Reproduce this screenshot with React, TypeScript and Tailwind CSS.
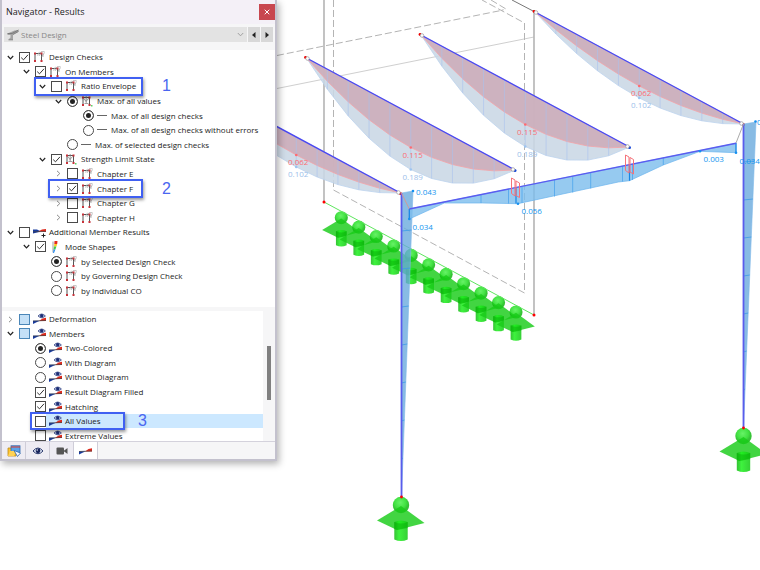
import { useState, type ReactNode } from 'react';
import { X } from 'lucide-react';
import clsx from 'clsx';

type IconName = 'frame' | 'frameMax' | 'dash' | 'member' | 'mode' | 'view';

type Item = {
  id: string;
  label: string;
  level: number;
  kind: 'checkbox' | 'radio';
  icon: IconName;
  group?: string;
  arrow?: 'open' | 'closed';
  checked?: boolean;
  partial?: boolean;
  selected?: boolean;
  callout?: { step: string; box: string };
};

const designItems: Item[] = [
  { id: 'design-checks', label: 'Design Checks', level: 0, kind: 'checkbox', icon: 'frame', arrow: 'open', checked: true },
  { id: 'on-members', label: 'On Members', level: 1, kind: 'checkbox', icon: 'frame', arrow: 'open', checked: true },
  {
    id: 'ratio-envelope', label: 'Ratio Envelope', level: 2, kind: 'checkbox', icon: 'frame', arrow: 'open',
    callout: { step: '1', box: 'left-8 w-[109px]' },
  },
  { id: 'max-values', label: 'Max. of all values', level: 3, kind: 'radio', group: 'envelope', icon: 'frameMax', arrow: 'open', checked: true },
  { id: 'max-checks', label: 'Max. of all design checks', level: 4, kind: 'radio', group: 'max', icon: 'dash', checked: true },
  { id: 'max-no-errors', label: 'Max. of all design checks without errors', level: 4, kind: 'radio', group: 'max', icon: 'dash' },
  { id: 'max-selected', label: 'Max. of selected design checks', level: 3, kind: 'radio', group: 'envelope', icon: 'dash' },
  { id: 'strength', label: 'Strength Limit State', level: 2, kind: 'checkbox', icon: 'frameMax', arrow: 'open', checked: true },
  { id: 'chapter-e', label: 'Chapter E', level: 3, kind: 'checkbox', icon: 'frame', arrow: 'closed' },
  {
    id: 'chapter-f', label: 'Chapter F', level: 3, kind: 'checkbox', icon: 'frame', arrow: 'closed', checked: true,
    callout: { step: '2', box: 'left-[46px] w-[95px]' },
  },
  { id: 'chapter-g', label: 'Chapter G', level: 3, kind: 'checkbox', icon: 'frame', arrow: 'closed' },
  { id: 'chapter-h', label: 'Chapter H', level: 3, kind: 'checkbox', icon: 'frame', arrow: 'closed' },
  { id: 'additional', label: 'Additional Member Results', level: 0, kind: 'checkbox', icon: 'member', arrow: 'open' },
  { id: 'mode-shapes', label: 'Mode Shapes', level: 1, kind: 'checkbox', icon: 'mode', arrow: 'open', checked: true },
  { id: 'by-selected', label: 'by Selected Design Check', level: 2, kind: 'radio', group: 'mode', icon: 'frame', checked: true },
  { id: 'by-governing', label: 'by Governing Design Check', level: 2, kind: 'radio', group: 'mode', icon: 'frame' },
  { id: 'by-co', label: 'by Individual CO', level: 2, kind: 'radio', group: 'mode', icon: 'frame' },
];

const displayItems: Item[] = [
  { id: 'deformation', label: 'Deformation', level: 0, kind: 'checkbox', icon: 'view', arrow: 'closed', partial: true },
  { id: 'members', label: 'Members', level: 0, kind: 'checkbox', icon: 'view', arrow: 'open', partial: true },
  { id: 'two-colored', label: 'Two-Colored', level: 1, kind: 'radio', group: 'style', icon: 'view', checked: true },
  { id: 'with-diagram', label: 'With Diagram', level: 1, kind: 'radio', group: 'style', icon: 'view' },
  { id: 'without-diagram', label: 'Without Diagram', level: 1, kind: 'radio', group: 'style', icon: 'view' },
  { id: 'filled', label: 'Result Diagram Filled', level: 1, kind: 'checkbox', icon: 'view', checked: true },
  { id: 'hatching', label: 'Hatching', level: 1, kind: 'checkbox', icon: 'view', checked: true },
  {
    id: 'all-values', label: 'All Values', level: 1, kind: 'checkbox', icon: 'view', selected: true,
    callout: { step: '3', box: 'left-7 w-[95px]' },
  },
  { id: 'extreme-values', label: 'Extreme Values', level: 1, kind: 'checkbox', icon: 'view' },
];

const indents = ['pl-0', 'pl-4', 'pl-8', 'pl-12', 'pl-16'];

function MemberShape() {
  return (
    <>
      <path d="M0 6.2 H7 L4 7.6 L0 9.6 Z" fill="#173a9e" />
      <path d="M6 6.6 L9.5 4 L13 3.2 V6.4 Z" fill="#dc2a1e" />
      <path d="M0 6.5 L13 6" stroke="#444" strokeWidth="0.7" />
    </>
  );
}

function TreeIcon({ name }: { name: IconName }) {
  if (name === 'dash') {
    return (
      <svg className="h-3 w-[10px] shrink-0" viewBox="0 0 10 12">
        <path d="M0 5.5 H10" stroke="#666" />
      </svg>
    );
  }
  if (name === 'mode') {
    return (
      <svg className="h-3 w-[13px] shrink-0" viewBox="0 0 13 12">
        <path d="M4 0.5 V11.5" stroke="#888" strokeWidth="0.8" />
        <path d="M5.5 0 H8.5 L8.2 3 H5.3 Z" fill="#e22a1e" />
        <path d="M5.3 3 H8.2 L7.4 5.5 H5 Z" fill="#ffc81e" />
        <path d="M5 5.5 H7.4 L6.4 8.5 H4.6 Z" fill="#42cc48" />
        <path d="M4.6 8.5 H6.4 L5 12 H4 Z" fill="#2b8df0" />
      </svg>
    );
  }
  if (name === 'member') {
    return (
      <svg className="h-3 w-[13px] shrink-0" viewBox="0 0 13 12">
        <path d="M0 3.5 H4 L8 5.5 L0 7.5 Z" fill="#173a9e" />
        <path d="M5 5.4 L9 3.6 L13 3 V6 Z" fill="#dc2a1e" />
        <path d="M0 5.8 L13 5.4" stroke="#444" strokeWidth="0.7" />
        <path d="M10.5 7.5 V11.5 M8.5 9.5 H12.5" stroke="#222" />
      </svg>
    );
  }
  if (name === 'view') {
    return (
      <svg className="h-3 w-[13px] shrink-0" viewBox="0 0 13 12">
        <g transform="translate(0 1.5)"><MemberShape /></g>
        <path d="M5 3 Q8.7 -1 12.4 3 Q8.7 6.6 5 3 Z" fill="#b8c4e4" stroke="#46568f" strokeWidth="0.9" />
        <circle cx="8.7" cy="2.8" r="1.7" fill="#1b2d75" />
      </svg>
    );
  }
  return (
    <svg className="h-3 w-[13px] shrink-0" viewBox="0 0 13 12" fill="none">
      <path d="M2 10 V2.5 H8.5 V10" stroke="#555" />
      {name === 'frame' ? (
        <path d="M4.5 4.5 L6.5 .8 M6 5 L8 1 M9 5.5 L11.5 1.5 M8 .7 H11.5 M10 3 V6" stroke="#aaa" strokeWidth="0.8" />
      ) : (
        <path d="M3 3.5 L5 6.5 L7.5 3.5 M3.5 8.5 H7.5 M5.2 1 V8" stroke="#888" strokeWidth="0.8" />
      )}
      <g fill="#c8323a">
        <rect x="1" y="1.5" width="2" height="2" />
        <rect x="7.5" y="1.5" width="2" height="2" />
        <rect x="1" y="9" width="2" height="2" />
        <rect x="7.5" y="9" width="2" height="2" />
      </g>
      {name === 'frameMax' && <rect x="10" y="10" width="1.5" height="1.5" fill="#5cd464" />}
    </svg>
  );
}

function Arrow({ open }: { open: boolean }) {
  return (
    <svg className="size-[7px]" viewBox="0 0 7 7" fill="none">
      {open ? (
        <path d="M.8 2 L3.5 4.8 L6.2 2" stroke="#222" strokeWidth="1.2" />
      ) : (
        <path d="M2 .8 L4.8 3.5 L2 6.2" stroke="#888" />
      )}
    </svg>
  );
}

function TreeRow({ item }: { item: Item }) {
  return (
    <li className={clsx('relative flex items-center', indents[item.level])}>
      <span className="flex w-[17px] shrink-0 justify-center">
        {item.arrow && (
          <button type="button" aria-label={`Toggle ${item.label}`}>
            <Arrow open={item.arrow === 'open'} />
          </button>
        )}
      </span>
      <span className="grid shrink-0 place-items-center">
        <input
          id={item.id}
          type={item.kind}
          name={item.group}
          defaultChecked={item.checked}
          className={clsx(
            'peer col-start-1 row-start-1 size-[11px] appearance-none border',
            item.kind === 'radio' && 'rounded-full checked:bg-[#222] checked:shadow-[inset_0_0_0_2px_#fff]',
            item.partial ? 'border-[#4a86b8] bg-[#c4e0f7]' : 'border-[#4a4a4a] bg-white'
          )}
        />
        {item.kind === 'checkbox' && (
          <svg className="pointer-events-none invisible col-start-1 row-start-1 size-[9px] peer-checked:visible" viewBox="0 0 9 9" fill="none">
            <path d="M1.2 4.6 L3.5 6.8 L8 1.8" stroke="#333" />
          </svg>
        )}
      </span>
      <label
        htmlFor={item.id}
        className={clsx(
          'flex h-full flex-1 items-center whitespace-nowrap pl-[3px]',
          item.icon === 'dash' ? 'gap-1' : 'gap-[3px]',
          item.selected && 'bg-[#cce8ff]'
        )}
      >
        <TreeIcon name={item.icon} />
        {item.label}
      </label>
      {item.callout && (
        <>
          <span className={clsx('pointer-events-none absolute -top-[2px] -bottom-[2px] z-10 border-2 border-[#4060f2] shadow-[1px_2px_3px_rgba(0,0,0,0.4)]', item.callout.box)} />
          <span className={clsx('pointer-events-none absolute z-10 font-["Liberation_Sans",sans-serif] text-base leading-4 text-[#4a66f0]', item.callout.step === '3' ? 'left-[136px]' : 'left-40')}>
            {item.callout.step}
          </span>
        </>
      )}
    </li>
  );
}

const tabs: { name: string; icon: ReactNode }[] = [
  {
    name: 'Data',
    icon: (
      <svg className="h-3 w-[14px]" viewBox="0 0 14 12">
        <path d="M1 3 H5 L6 4.5 H9 V11 H1 Z" fill="#ffc42e" stroke="#b98a1c" strokeWidth="0.8" />
        <rect x="4" y="0.8" width="9" height="6.5" fill="#5aa2e8" stroke="#2c66ac" strokeWidth="0.8" />
        <path d="M4 2 H13" stroke="#e23b2e" />
        <path d="M3 6 H9 L7 11 H1 Z" fill="#ffd256" />
        <path d="M7 5.5 L13.5 8 L10.5 11.5 Z" fill="#f4f8ff" stroke="#2c66ac" strokeWidth="0.8" />
      </svg>
    ),
  },
  {
    name: 'Display',
    icon: (
      <svg className="h-3 w-3" viewBox="0 0 12 12">
        <path d="M1 6 Q6 0 11 6 Q6 11.5 1 6 Z" fill="#e3e9fa" stroke="#2c3a6c" />
        <circle cx="6" cy="5.8" r="2.4" fill="#18255c" />
        <circle cx="5.2" cy="5" r="0.7" fill="#fff" />
      </svg>
    ),
  },
  {
    name: 'Views',
    icon: (
      <svg className="h-3 w-3" viewBox="0 0 12 12" fill="#555">
        <rect x="0.5" y="2.5" width="7.5" height="7" rx="1" />
        <path d="M7.5 6 L11.5 3 V9 Z" />
      </svg>
    ),
  },
  { name: 'Results', icon: <svg className="h-3 w-[13px]" viewBox="0 0 13 12"><MemberShape /></svg> },
];

function Navigator() {
  const [activeTab, setActiveTab] = useState('Results');

  return (
    <aside className='relative z-10 w-[277px] shrink-0 self-start border-x-2 border-b-2 border-[#c3c1cd] bg-[#f6f6f7] font-["Open_Sans","Noto_Sans",sans-serif] text-[8px] leading-3 text-[#1c1c1c] shadow-[2px_3px_7px_rgba(0,0,0,0.3)]'>
      <header className="flex h-6 items-center justify-between bg-[#f4f0f7] pl-1">
        <h1 className="text-[9px]">Navigator - Results</h1>
        <button type="button" aria-label="Close" className="grid size-4 place-items-center bg-[#c8474f] text-white">
          <X className="size-2" strokeWidth={3} />
        </button>
      </header>

      <div className="flex gap-px px-[2px] pt-[3px] pb-2">
        <div className="flex h-[15px] flex-1 items-center bg-[#e3e3e3] px-[3px] text-[#888]">
          <svg className="h-3 w-3" viewBox="0 0 12 12">
            <path d="M0.5 4.5 L7.5 1.5 L11.5 1 V2.5 L6 5.5 V10.5 H1.5 L3.5 8.5 V6 H0.5 Z" fill="#a4a4a4" />
            <path d="M0.5 4.5 H5 L11.5 1 M6 5.5 L11.5 2.5 M1.5 10.8 H6" stroke="#777" strokeWidth="0.9" fill="none" />
          </svg>
          <select aria-label="Result type" disabled className="flex-1 appearance-none pl-[2px] opacity-100">
            <option>Steel Design</option>
          </select>
          <svg className="size-[7px]" viewBox="0 0 7 7" fill="none">
            <path d="M.8 2 L3.5 4.8 L6.2 2" stroke="#999" strokeWidth="0.9" />
          </svg>
        </div>
        <button type="button" aria-label="Previous" className="grid w-3 place-items-center bg-[#d8d8d8]">
          <svg className="size-[6px]" viewBox="0 0 6 6"><path d="M4.5 0 V6 L1 3 Z" fill="#222" /></svg>
        </button>
        <button type="button" aria-label="Next" className="grid w-3 place-items-center bg-[#d8d8d8]">
          <svg className="size-[6px]" viewBox="0 0 6 6"><path d="M1.5 0 V6 L5 3 Z" fill="#222" /></svg>
        </button>
      </div>

      <ul className="grid min-h-[257px] auto-rows-fr bg-white pb-[9px]">
        {designItems.map((item) => (
          <TreeRow key={item.id} item={item} />
        ))}
      </ul>

      <div className="mt-1 flex h-[130px] overflow-hidden">
        <ul className="grid min-h-[132px] flex-1 auto-rows-fr self-start bg-white pt-px">
          {displayItems.map((item) => (
            <TreeRow key={item.id} item={item} />
          ))}
        </ul>
        <div className="flex w-3 justify-center pt-[35px]">
          <span className="h-[54px] w-1 bg-[#808080]" />
        </div>
      </div>

      <div role="tablist" className="flex h-[18px] border-t border-[#d4d2dc]">
        {tabs.map((tab) => (
          <button
            key={tab.name}
            type="button"
            role="tab"
            aria-label={tab.name}
            aria-selected={tab.name === activeTab}
            onClick={() => setActiveTab(tab.name)}
            className={clsx('grid w-6 place-items-center border-r border-[#cfcdd8]', tab.name === activeTab ? 'bg-white' : 'bg-[#eeecf3]')}
          >
            {tab.icon}
          </button>
        ))}
      </div>
    </aside>
  );
}

const beams = [
  { x: 192, y: 81, ratio: 18, total: 30, labels: ['0.062', '0.102'] },
  { x: 306.5, y: 58, ratio: 33.5, total: 55.5, labels: ['0.115', '0.189'] },
  { x: 421, y: 35, ratio: 33.5, total: 55.5, labels: ['0.115', '0.189'] },
  { x: 535, y: 12, ratio: 18, total: 30, labels: ['0.062', '0.102'] },
];

const SPAN_X = 208.5;
const SPAN_Y = 112;
const steps = Array.from({ length: 11 }, (_, i) => i / 10);

function Beam({ beam }: { beam: (typeof beams)[number] }) {
  const at = (t: number, depth: number) => [beam.x + SPAN_X * t, beam.y + SPAN_Y * t + 4 * t * (1 - t) * depth];
  const curve = (depth: number) => steps.map((t) => at(t, depth).join(',')).join(' ');
  const [midX, ratioY] = at(0.5, beam.ratio);
  const totalY = at(0.5, beam.total)[1];
  const [endX, endY] = at(1, 0);

  return (
    <g>
      <polygon points={curve(beam.total)} fill="#c9d7e5" fillOpacity="0.88" stroke="#bdd3ee" strokeWidth="0.8" />
      <polygon points={curve(beam.ratio)} fill="#ccaab7" fillOpacity="0.85" />
      <polyline points={curve(beam.ratio)} fill="none" stroke="#f4a3a8" strokeWidth="0.8" />
      {steps.slice(1, -1).map((t) => {
        const [x, top] = at(t, 0);
        return <line key={t} x1={x} x2={x} y1={top} y2={at(t, beam.total)[1]} stroke="#a9c2ee" strokeOpacity="0.6" />;
      })}
      <line x1={beam.x} y1={beam.y} x2={endX} y2={endY} stroke="#4a48f2" strokeWidth="1.4" />
      <circle cx={midX} cy={ratioY} r="1.3" fill="#ff6b70" />
      <circle cx={midX} cy={totalY} r="1.3" fill="#9cc4f0" />
      <text x={midX + 2} y={ratioY + 10} textAnchor="middle" fill="#fb6e74">{beam.labels[0]}</text>
      <text x={midX + 2} y={totalY + 10} textAnchor="middle" fill="#9cc0ea">{beam.labels[1]}</text>
      <circle cx={beam.x - 1} cy={beam.y - 0.5} r="1.4" fill="#e00" />
      <circle cx={beam.x + 1} cy={beam.y + 0.5} r="1.8" fill="#fff" stroke="#999" strokeWidth="0.7" />
      <circle cx={endX} cy={endY + 0.5} r="1.5" fill={beam.total > 40 ? '#1646d8' : '#e00'} />
      <circle cx={endX - 2} cy={endY - 0.5} r="1.8" fill="#fff" stroke="#999" strokeWidth="0.7" />
    </g>
  );
}

function Column({ x, top, bottom, width }: { x: number; top: number; bottom: number; width: number }) {
  return (
    <g>
      <polygon points={`${x},${top} ${x + width},${top - 2} ${x},${bottom}`} fill="#66a8dd" fillOpacity="0.78" stroke="#7db8ea" strokeWidth="0.6" />
      {[1, 2, 3, 4, 5, 6, 7].map((i) => {
        const y = top + ((bottom - top) * i) / 8;
        return <line key={i} x1={x} y1={y} x2={x + width * (1 - i / 8)} y2={y - 1} stroke="#3c9ae8" strokeWidth="0.8" />;
      })}
      <line x1={x} y1={top} x2={x} y2={bottom} stroke="#5a5cec" strokeWidth="1.8" />
    </g>
  );
}

function Support({ x, y, scale = 1 }: { x: number; y: number; scale?: number }) {
  return (
    <g transform={`translate(${x} ${y}) scale(${scale})`}>
      <circle r="8.2" fill="url(#ball)" fillOpacity="0.85" />
      <path d="M-24 15.5 L0 1 L23.5 18 L-4 25 Z" fill="#18cc18" fillOpacity="0.82" />
      <path d="M-6.7 17 Q0 14 6.7 17 V34.5 Q0 37.5 -6.7 34.5 Z" fill="url(#tube)" fillOpacity="0.85" />
      <path d="M-6.7 17 Q0 20 6.7 17 V23 L-4 25 L-6.7 24 Z" fill="#06a806" fillOpacity="0.45" />
    </g>
  );
}

const lineSupports = Array.from({ length: 11 }, (_, i) => ({ x: 341.3 + 17.47 * i, y: 217.7 + 9.43 * i }));

const rafterHatch = [
  [481, 194.5, 203], [508.5, 189, 203.5], [522, 186.3, 203], [554.5, 179.7, 196.5], [572.7, 176, 192.5],
  [590.7, 172.4, 188.5], [622.5, 166, 181.5], [632.5, 164, 180], [663.3, 157.8, 165],
];

const rafterNodes = [[409.3, 219], [413, 191], [518, 203.7], [700, 151.3], [736, 152.7], [755.5, 121.5]];

const rafterLabels: [number, number, string][] = [
  [416, 194.5, '0.043'],
  [412.5, 229.5, '0.034'],
  [521.5, 213.5, '0.056'],
  [703.5, 161.5, '0.003'],
  [739.5, 163.5, '0.034'],
  [757, 125, '0'],
];

function ModelView() {
  return (
    <svg
      className='h-screen min-w-0 flex-1 font-["Open_Sans","Noto_Sans",sans-serif] text-[8px]'
      viewBox="277 0 483 570"
      preserveAspectRatio="xMinYMin slice"
      role="img"
      aria-label="Design ratios on the frame model"
    >
      <defs>
        <radialGradient id="ball" cx="0.45" cy="0.35">
          <stop offset="0" stopColor="#4cf04c" />
          <stop offset="0.7" stopColor="#20dc20" />
          <stop offset="1" stopColor="#12b812" />
        </radialGradient>
        <linearGradient id="tube">
          <stop offset="0" stopColor="#12b812" />
          <stop offset="0.35" stopColor="#1cf01c" />
          <stop offset="1" stopColor="#12c812" />
        </linearGradient>
      </defs>

      {/* Building outline */}
      <g fill="none" stroke="#b4b4b4">
        <path d="M277 88.5 L534 37" stroke="#cfcfcf" />
        <path d="M324 0 V202 M534 11 V314" strokeWidth="1.6" />
        <path d="M512 0 L534 11.5" stroke="#777" />
        <path d="M333.5 0 V190 L524.5 293 V23 L482 0 M277 55.5 L501 10.5 M491 0 L506 9 L501 10.5" strokeDasharray="7 3" />
      </g>

      {lineSupports.map((s) => (
        <Support key={s.x} x={s.x} y={s.y} scale={0.8} />
      ))}
      <path d="M324 202 L534 315" stroke="#5ee65e" />

      {beams.map((beam) => (
        <Beam key={beam.x} beam={beam} />
      ))}

      <Support x={401} y={505} />
      <Support x={743.5} y={436} />
      <Column x={401.5} top={193} bottom={497} width={11.5} />
      <Column x={743.5} top={124} bottom={428} width={12.5} />

      {/* Rafter with its ratio diagram */}
      <path d="M401.5 193 L409.3 209" stroke="#d09a9a" />
      <path d="M743.5 124 L736 143" stroke="#aaa" />
      <polygon
        points="409.3,209 409.3,219 444.3,203 482.7,203 517.7,203.7 618.3,182 629.5,180.7 663.3,165 700,151.3 736,152.7 736,143.3"
        fill="#7cbdec"
        fillOpacity="0.8"
        stroke="#6bb4ee"
        strokeWidth="0.7"
      />
      {rafterHatch.map(([x, y1, y2]) => (
        <line key={x} x1={x} x2={x} y1={y1} y2={y2} stroke="#4da4ec" strokeWidth="0.8" />
      ))}
      <path d="M516 187.5 V203.5 M629.5 164.6 V180.7 M409.3 209 V219 M736 143 V153" stroke="#1685e4" strokeWidth="1.2" />
      <path d="M409.3 209 L736 143.3" stroke="#5a5cf0" strokeWidth="1.4" />
      <g fill="none" stroke="#f5737a">
        <path d="M511.5 178 L515 180 V196 L511.5 193.5 Z M516 181 L519.5 183 V197.5 L516 195.5 Z" />
        <path d="M625.5 155 L629 157 V173 L625.5 170.5 Z M630 157.5 L633.5 159.5 V174 L630 172 Z" />
      </g>
      {rafterNodes.map(([x, y]) => (
        <circle key={x} cx={x} cy={y} r="1.3" fill="#1590f0" />
      ))}
      {rafterLabels.map(([x, y, text]) => (
        <text key={x} x={x} y={y} fill="#1496f0">{text}</text>
      ))}

      <g fill="#f00">
        <circle cx="324" cy="202" r="1.5" />
        <circle cx="534" cy="315" r="1.5" />
        <circle cx="401.5" cy="497" r="1.4" />
        <circle cx="743.5" cy="428" r="1.4" />
      </g>
    </svg>
  );
}

export default function App() {
  return (
    <main className="flex min-h-screen overflow-hidden bg-white">
      <Navigator />
      <ModelView />
    </main>
  );
}
